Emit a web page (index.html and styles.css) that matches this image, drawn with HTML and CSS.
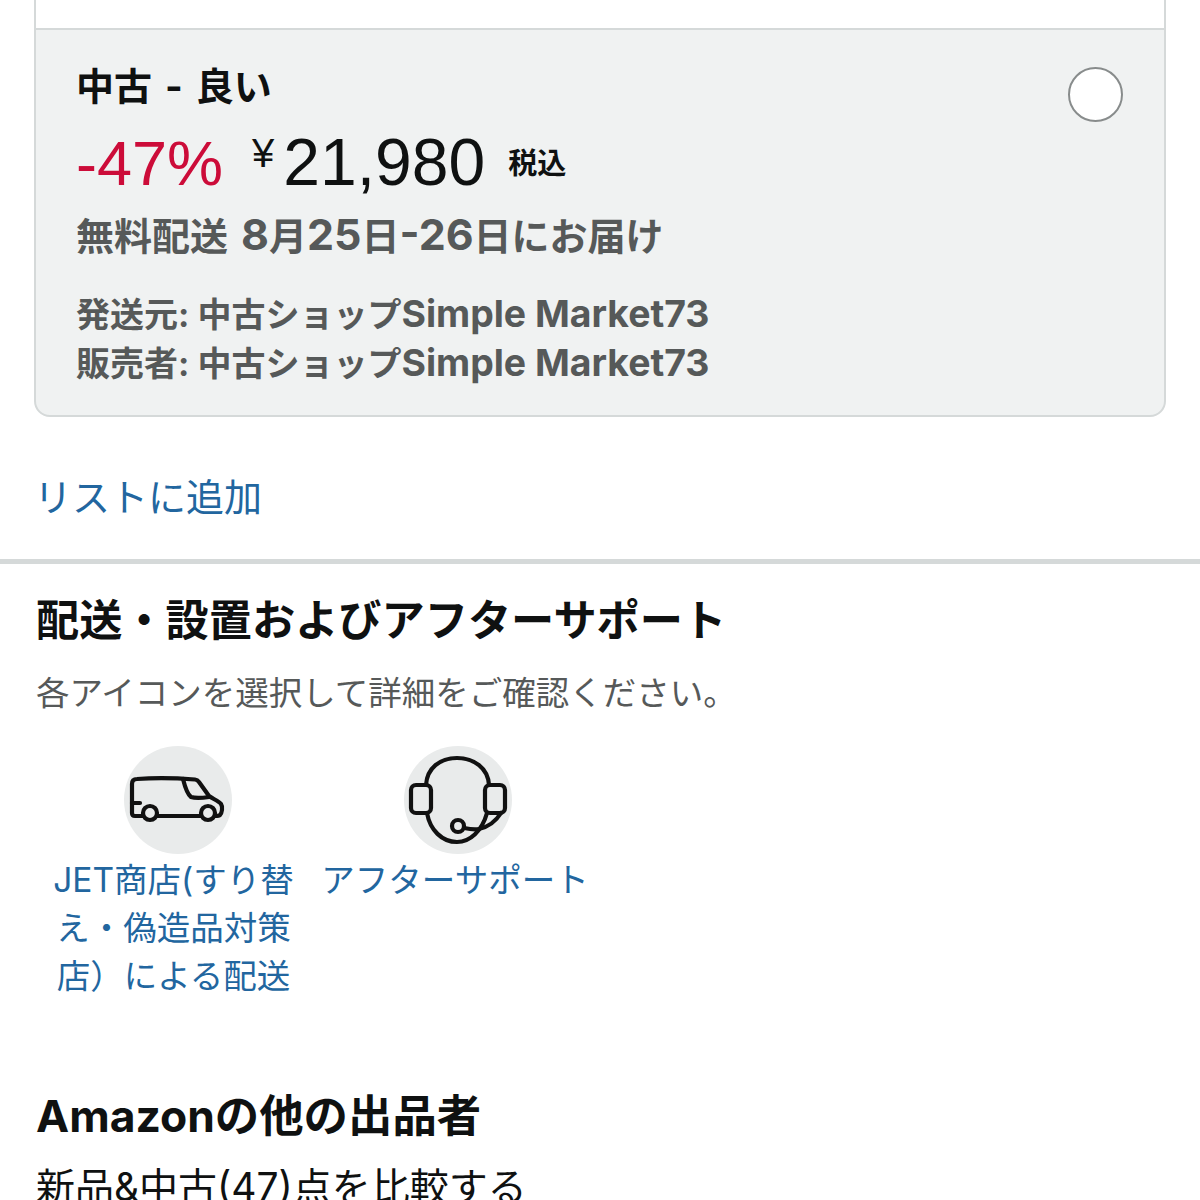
FILE: index.html
```html
<!DOCTYPE html>
<html lang="ja">
<head>
  <meta charset="UTF-8" />
  <meta name="viewport" content="width=device-width, initial-scale=1.0"/>
  <title>中古 - 良い</title>
  <link rel="stylesheet" href="styles.css">
</head>
<body>

  <section class="offers">
    <div class="offer-prev"></div>
    <div class="offer">
      <div class="offer-info">
        <h2 class="condition">中古 - 良い</h2>
        <div class="price-row">
          <span class="discount">-47%</span>
          <span class="yen">¥</span>
          <span class="price">21,980</span>
          <span class="tax">税込</span>
        </div>
        <p class="delivery">無料配送 <span class="num">8</span>月<span class="num">25</span>日<span class="num">-26</span>日にお届け</p>
        <p class="seller">発送元: 中古ショップ<span class="lat">Simple Market73</span></p>
        <p class="seller">販売者: 中古ショップ<span class="lat">Simple Market73</span></p>
      </div>
      <span class="radio"></span>
    </div>
  </section>

  <a class="add-list" href="#list">リストに追加</a>

  <section class="support">
    <h3>配送・設置およびアフターサポート</h3>
    <p class="support-note">各アイコンを選択して詳細をご確認ください。</p>
    <div class="support-icons">
      <a class="support-item ship" href="#ship">
        <span class="icon-circle">
          <svg width="108" height="108" viewBox="0 0 108 108" fill="none" stroke="#111" stroke-width="4.200" stroke-linecap="round" stroke-linejoin="round">
            <path d="M19 70H11C9 70 8 69 8 67V38C8 34 10 33 13 33C32 31.500 52 32 71 33.500C73 33.700 74 34.500 75 36L85 50C89 53 95 55 97 58C99 61 98 67 96 69C95 70 93 70 91 70"/>
            <path d="M33 70H77"/>
            <circle cx="26" cy="67" r="7"/>
            <circle cx="84" cy="67" r="7"/>
            <path d="M59 33C61 41 63 48 67 51C70 52 78 52 85 51"/>
            <path d="M8 57H16"/>
          </svg>
        </span>
        <span class="item-label">JET商店(すり替え・偽造品対策店）による配送</span>
      </a>
      <a class="support-item after" href="#after">
        <span class="icon-circle">
          <svg width="108" height="108" viewBox="0 0 108 108" fill="none" stroke="#111" stroke-width="4.200" stroke-linecap="round" stroke-linejoin="round">
            <rect x="7" y="39" width="20" height="28" rx="5"/>
            <rect x="81" y="39" width="20" height="28" rx="5"/>
            <path d="M22 39C23 22 36 12 53 12C70 12 84 22 85 39"/>
            <path d="M23 67C26 84 38 96 53 96C66 96 78 85 83 67"/>
            <circle cx="54" cy="80" r="6"/>
            <path d="M60 82C65 83 70 84 75 83C84 81 92 75 97 67"/>
          </svg>
        </span>
        <span class="item-label">アフターサポート</span>
      </a>
    </div>
  </section>

  <section class="sellers">
    <h3>Amazonの他の出品者</h3>
    <p class="compare">新品&amp;中古(47)点を比較する</p>
  </section>

</body>
</html>
```

FILE: styles.css
```css
html, body {
  height: 1200px;
  overflow: hidden;
}

body {
  margin: 0;
  background: #fff;
  color: #0f1111;
  font-family: Inter, "Noto Sans CJK JP", sans-serif;
}

h2, h3, p {
  margin: 0;
}

a {
  color: #22669f;
  text-decoration: none;
}

.lat {
  font-size: 1.1em;
}

.num {
  font-size: 1.13em;
}

.offers {
  margin: 0 34px;
}

.offer-prev {
  height: 28px;
  border-left: 2px solid #d5d9d9;
  border-right: 2px solid #d5d9d9;
}

.offer {
  display: flex;
  justify-content: space-between;
  height: 389px;
  box-sizing: border-box;
  padding: 34px 40px 0;
  background: #f0f2f2;
  border: 2px solid #d5d9d9;
  border-radius: 0 0 16px 16px;
}

.condition {
  font-size: 38px;
  line-height: 44px;
  font-weight: 700;
  word-spacing: 4px;
}

.price-row {
  display: flex;
  align-items: baseline;
  height: 72px;
  margin-top: 18px;
  font-family: "Liberation Sans", sans-serif;
}

.discount {
  font-size: 63px;
  line-height: 72px;
  color: #cc0c39;
}

.yen {
  margin-left: 29px;
  font-size: 40px;
  position: relative;
  top: -18px;
}

.price {
  margin-left: 9px;
  font-size: 66px;
  line-height: 72px;
}

.tax {
  margin-left: 23px;
  font-family: "Noto Sans CJK JP", sans-serif;
  font-size: 29px;
  font-weight: 700;
  position: relative;
  top: -11px;
}

.delivery {
  margin-top: 8px;
  font-size: 38px;
  line-height: 56px;
  font-weight: 700;
  color: #565959;
  word-spacing: 4px;
}

.seller {
  font-size: 34px;
  line-height: 48px;
  font-weight: 700;
  color: #565959;
}

.delivery + .seller {
  margin-top: 26px;
}

.radio {
  flex: none;
  width: 51px;
  height: 51px;
  margin: 3px 1px 0 0;
  background: #fff;
  border: 2px solid #888c8c;
  border-radius: 50%;
}

.add-list {
  display: block;
  margin: 55px 0 0 34px;
  font-size: 38px;
  line-height: 50px;
}

.support {
  margin-top: 37px;
  padding: 28px 36px 0;
  border-top: 5px solid #d5d9d9;
}

.support h3 {
  font-size: 43.2px;
  line-height: 56px;
  font-weight: 700;
}

.support-note {
  margin-top: 21px;
  font-size: 33.500px;
  line-height: 48px;
  color: #565959;
}

.support-icons {
  display: flex;
  gap: 26px;
  margin-top: 29px;
}

.support-item {
  display: flex;
  flex-direction: column;
  align-items: center;
  width: 243px;
  text-align: center;
  font-size: 33.500px;
  line-height: 48px;
}

.support-item.ship {
  margin-left: 16px;
}

.support-item.after {
  width: 268px;
}

.icon-circle {
  display: flex;
  width: 108px;
  height: 108px;
  margin-bottom: 2px;
  background: #e9ebeb;
  border-radius: 50%;
}

.ship .icon-circle {
  margin-left: 8px;
}

.after .icon-circle {
  margin-left: 6px;
}

.item-label {
  display: block;
}

.sellers {
  margin-top: 88px;
  padding: 0 36px;
}

.sellers h3 {
  font-size: 44.400px;
  line-height: 56px;
  font-weight: 700;
}

.compare {
  margin-top: 18px;
  font-size: 39px;
  line-height: 50px;
  color: #0f1111;
}
```
